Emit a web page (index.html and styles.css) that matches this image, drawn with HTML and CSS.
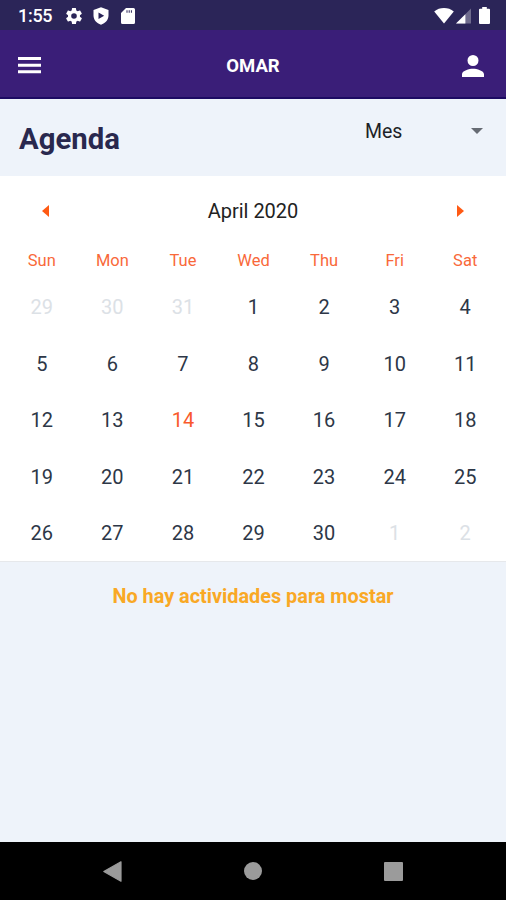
FILE: index.html
```html
<!DOCTYPE html>
<html lang="es">
<head>
<meta charset="utf-8">
<title>Agenda</title>
<link rel="stylesheet" href="styles.css">
</head>
<body>
<div class="status">
  <span class="clock">1:55</span>
  <svg class="gear" viewBox="2 2 20 20"><path fill-rule="evenodd" d="M19.4 13a7.600 7.600 0 0 0 0-2l2.100-1.650a.5.5 0 0 0 .12-.64l-2-3.460a.5.5 0 0 0-.61-.22l-2.490 1a7.300 7.300 0 0 0-1.690-.98l-.38-2.650A.49.49 0 0 0 14 2h-4a.49.49 0 0 0-.49.42l-.38 2.650c-.61.25-1.170.59-1.690.98l-2.490-1a.5.5 0 0 0-.61.22l-2 3.460a.5.5 0 0 0 .12.64L4.570 11a7.600 7.600 0 0 0 0 2l-2.110 1.650a.5.5 0 0 0-.12.640l2 3.460a.5.5 0 0 0 .61.22l2.490-1c.52.4 1.080.73 1.690.98l.38 2.650a.49.49 0 0 0 .49.42h4a.49.49 0 0 0 .49-.42l.38-2.650a7.300 7.300 0 0 0 1.690-.98l2.490 1a.5.5 0 0 0 .61-.22l2-3.460a.5.5 0 0 0-.12-.64zM12 15.500a3.500 3.500 0 1 1 0-7 3.500 3.500 0 0 1 0 7z"/></svg>
  <svg class="shield" viewBox="0 0 16 18"><path fill-rule="evenodd" d="M8 .3 15.500 3v5.500c0 4.200-3.100 7.800-7.500 9.200C3.600 16.300.5 12.700.5 8.500V3zM5.500 5.600v6.400L11.200 8.800z"/></svg>
  <svg class="sd" viewBox="0 0 14 16"><path fill-rule="evenodd" d="M5 0h7.500Q14 0 14 1.500v13q0 1.500-1.500 1.500h-11Q0 16 0 14.500V5zM5.500 2.300v2.400h1v-2.400zM7.700 2.300v2.400h1v-2.400zM9.900 2.300v2.400h1v-2.400z"/></svg>
  <svg class="wifi" viewBox="0 0 20 16"><path d="M10 15.500.2 3.400C3 1.200 6.300 0 10 0s7 1.200 9.800 3.400z"/></svg>
  <svg class="signal" viewBox="0 0 16 16"><path opacity=".32" d="M16 0v16H0z"/><path d="M10 6v10H0z"/></svg>
  <svg class="battery" viewBox="0 0 11 17"><path d="M3.200 0h4.600v1.700H10q1 0 1 1V16q0 1-1 1H1q-1 0-1-1V2.700q0-1 1-1h2.200z"/></svg>
</div>
<header class="appbar">
  <svg class="menu" viewBox="0 0 23 17"><path d="M0 0h23v3H0zM0 6.700h23v3H0zM0 13.300h23v3H0z"/></svg>
  <h1 class="user">OMAR</h1>
  <svg class="person" viewBox="4 4 16 16"><path d="M12 12a4 4 0 1 0 0-8 4 4 0 0 0 0 8zm0 2c-2.670 0-8 1.340-8 4v2h16v-2c0-2.660-5.330-4-8-4z"/></svg>
</header>
<section class="heading">
  <h2 class="title">Agenda</h2>
  <div class="picker"><span>Mes</span><svg class="caret" viewBox="0 0 12 6"><path d="M0 0h12L6 6z"/></svg></div>
</section>
<main class="calendar">
  <div class="month">
    <svg class="arrow" viewBox="0 0 7 12"><path d="M7 0v12L0 6z"/></svg>
    <span>April 2020</span>
    <svg class="arrow" viewBox="0 0 7 12"><path d="M0 0v12l7-6z"/></svg>
  </div>
  <div class="week names"><span>Sun</span><span>Mon</span><span>Tue</span><span>Wed</span><span>Thu</span><span>Fri</span><span>Sat</span></div>
  <div class="week days">
    <span class="out">29</span><span class="out">30</span><span class="out">31</span><span>1</span><span>2</span><span>3</span><span>4</span>
    <span>5</span><span>6</span><span>7</span><span>8</span><span>9</span><span>10</span><span>11</span>
    <span>12</span><span>13</span><span class="today">14</span><span>15</span><span>16</span><span>17</span><span>18</span>
    <span>19</span><span>20</span><span>21</span><span>22</span><span>23</span><span>24</span><span>25</span>
    <span>26</span><span>27</span><span>28</span><span>29</span><span>30</span><span class="out">1</span><span class="out">2</span>
  </div>
</main>
<p class="empty">No hay actividades para mostar</p>
<nav class="navbar">
  <svg class="back" viewBox="0 0 19 21"><path d="M18 .8v19.400L.8 10.500z" stroke-width="1.200" stroke-linejoin="round"/></svg>
  <span class="home"></span>
  <span class="recent"></span>
</nav>
</body>
</html>
```
FILE: styles.css
```css
* { box-sizing: border-box; }
body {
  margin: 0;
  height: 900px;
  display: flex;
  flex-direction: column;
  overflow: hidden;
  background: #eef3fa;
  color: #1f2937;
  font-family: Roboto, "Liberation Sans", sans-serif;
}
svg { display: block; flex: none; }
h1, h2, p { margin: 0; }

.status {
  height: 30px;
  flex: none;
  display: flex;
  align-items: center;
  padding: 1px 16px 0 18px;
  background: #2b2558;
  color: #fff;
  fill: #fff;
}
.clock { width: 48px; font-size: 18px; font-weight: 500; line-height: 28px; letter-spacing: -0.300px; }
.gear { width: 16px; height: 16px; }
.shield { width: 16px; height: 18px; margin-left: 11px; }
.sd { width: 14px; height: 16px; margin-left: 12px; }
.wifi { width: 20px; height: 16px; margin-left: auto; }
.signal { width: 15px; height: 16px; margin-left: 2px; }
.battery { width: 11px; height: 17px; margin-left: 8px; }

.appbar {
  height: 69px;
  flex: none;
  display: grid;
  grid-template-columns: 1fr auto 1fr;
  align-items: center;
  padding: 4px 22px 0 18px;
  border-bottom: 2px solid #1d0b63;
  background: #3a1e78;
  color: #fff;
  fill: #fff;
}
.menu { width: 23px; height: 17px; }
.user { font-size: 18.500px; font-weight: 700; line-height: 24px; padding: 1px 0 0 4px; }
.person { width: 22px; height: 22px; justify-self: end; }

.heading {
  height: 77px;
  flex: none;
  display: flex;
  justify-content: space-between;
  padding: 0 23px 0 19px;
}
.title { font-size: 29.300px; font-weight: 700; line-height: 40px; margin-top: 20px; color: #29284e; }
.picker {
  width: 118px;
  height: 24px;
  margin-top: 20px;
  display: flex;
  align-items: center;
  justify-content: space-between;
  font-size: 19.500px;
  color: #1d1f27;
}
.caret { width: 12px; height: 6px; fill: #666b73; }

.calendar {
  height: 386px;
  flex: none;
  padding: 0 5.500px 0 6.500px;
  background: #fff;
  border-bottom: 1px solid #e6e8eb;
}
.month {
  height: 70px;
  display: flex;
  align-items: center;
  justify-content: space-between;
  padding: 0 36.500px 0 35.500px;
  font-size: 20px;
  color: #222;
}
.arrow { width: 7px; height: 12px; fill: #ff5a14; }
.week { display: grid; grid-template-columns: repeat(7, 1fr); text-align: center; }
.names { height: 33px; line-height: 30px; font-size: 16.500px; color: #f9693a; }
.days { grid-auto-rows: 56.600px; line-height: 56.600px; font-size: 20px; color: #2d3747; }
.out { color: #dce1e6; }
.today { color: #f9592c; }

.empty {
  flex: 1;
  padding-top: 21px;
  text-align: center;
  font-size: 19.850px;
  font-weight: 700;
  line-height: 28px;
  color: #f9a825;
}
.navbar {
  height: 58px;
  flex: none;
  display: flex;
  align-items: center;
  justify-content: space-between;
  padding: 0 103px 0 103px;
  background: #000;
}
.back { width: 19px; height: 21px; fill: #9b9b9b; stroke: #9b9b9b; }
.home { width: 18px; height: 18px; border-radius: 50%; background: #9b9b9b; }
.recent { width: 19px; height: 19px; border-radius: 1px; background: #9b9b9b; }
```
